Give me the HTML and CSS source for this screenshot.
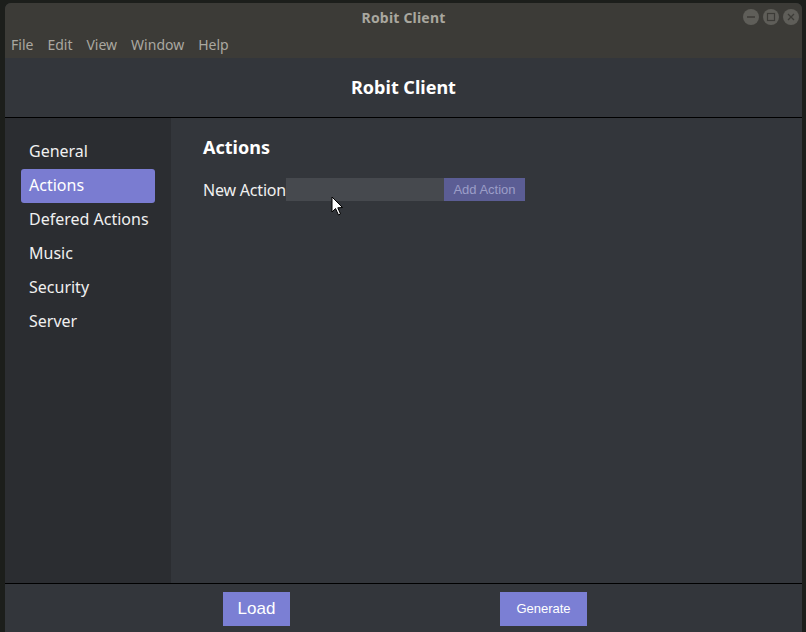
FILE: index.html
```html
<!DOCTYPE html>
<html>
<head>
<meta charset="utf-8">
<link rel="stylesheet" href="styles.css">
</head>
<body>
<div class="desktop">
  <div class="window">
    <div class="titlebar">
      <span class="title">Robit Client</span>
      <div class="wbtns">
        <span class="wbtn"><svg width="16" height="16" viewBox="0 0 16 16"><line x1="4" y1="8" x2="12" y2="8" stroke="#3c3b37" stroke-width="1.5"/></svg></span>
        <span class="wbtn"><svg width="16" height="16" viewBox="0 0 16 16"><rect x="4.5" y="4.5" width="7" height="7" fill="none" stroke="#3c3b37" stroke-width="1.2"/></svg></span>
        <span class="wbtn"><svg width="16" height="16" viewBox="0 0 16 16"><path d="M5 5 L11 11 M11 5 L5 11" stroke="#3c3b37" stroke-width="1.3"/></svg></span>
      </div>
    </div>
    <div class="menubar">
      <span>File</span><span>Edit</span><span>View</span><span>Window</span><span>Help</span>
    </div>
    <div class="app">
      <header class="header">Robit Client</header>
      <div class="main">
        <nav class="sidebar">
          <div class="item">General</div>
          <div class="item active">Actions</div>
          <div class="item">Defered Actions</div>
          <div class="item">Music</div>
          <div class="item">Security</div>
          <div class="item">Server</div>
        </nav>
        <section class="content">
          <h2 class="heading">Actions</h2>
          <div class="row">
            <label class="label">New Action</label>
            <div class="input"></div>
            <button class="add">Add Action</button>
          </div>
          <svg class="cursor" width="14" height="22" viewBox="0 0 14 22"><path d="M1 1 L1 16 L4.5 12.5 L7.5 19 L9.5 18 L6.8 11.8 L11.5 11.5 Z" fill="#fff" stroke="#000" stroke-width="1"/></svg>
        </section>
      </div>
      <footer class="footer">
        <button class="fbtn load">Load</button>
        <button class="fbtn gen">Generate</button>
      </footer>
    </div>
  </div>
</div>
</body>
</html>
```
FILE: styles.css
```css
* { box-sizing: border-box; }
html, body { margin: 0; padding: 0; }
body { width: 806px; height: 632px; overflow: hidden; background: #1c1e1b; font-family: "Noto Sans", "Open Sans", sans-serif; }
.desktop { width: 806px; height: 632px; padding: 3px 4px 0 5px; }
.window { width: 797px; height: 629px; display: flex; flex-direction: column; background: #33363b; border-radius: 6px 6px 0 0; overflow: hidden; }
.titlebar { height: 29px; background: #3c3b37; display: flex; align-items: center; justify-content: center; position: relative; flex: none; }
.title { color: #a9a79f; font-weight: bold; font-size: 14px; letter-spacing: 0.2px; }
.wbtns { position: absolute; right: 3px; top: 6px; display: flex; gap: 4px; }
.wbtn { width: 16px; height: 16px; border-radius: 50%; background: #5f5e59; display: block; }
.wbtn svg { display: block; }
.menubar { height: 26px; background: #3c3b37; display: flex; align-items: center; padding-left: 6px; color: #aaa8a0; font-size: 14px; flex: none; }
.menubar span { padding-bottom: 1px; margin-right: 14px; }
.app { flex: 1; display: flex; flex-direction: column; }
.header { height: 60px; flex: none; display: flex; align-items: center; justify-content: center; color: #fff; font-weight: bold; font-size: 18px; border-bottom: 1px solid #000; padding-bottom: 2px; }
.main { flex: 1; display: flex; }
.sidebar { width: 166px; background: #2b2d31; padding: 17px 16px 0 16px; display: flex; flex-direction: column; }
.item { height: 34px; line-height: 32px; color: #f0f0f0; font-size: 16px; padding-left: 8px; border-radius: 3px; }
.item.active { background: #7a7cd1; color: #fff; }
.content { flex: 1; padding: 16px 32px; position: relative; }
.heading { margin: 0 0 17px 0; color: #fff; font-size: 18px; font-weight: bold; line-height: 27px; }
.row { display: flex; align-items: center; height: 23px; }
.label { color: #f0f0f0; font-size: 16px; letter-spacing: -0.2px; }
.input { width: 158px; height: 23px; background: #46494e; }
.add { width: 81px; height: 23px; border: 0; margin: 0; padding: 0; background: #5b5d94; color: #9c9ec8; font-family: "Liberation Sans", Arial, sans-serif; font-size: 13px; }
.cursor { position: absolute; left: 160px; top: 78px; }
.footer { height: 49px; flex: none; border-top: 1px solid #000; display: flex; align-items: center; padding-top: 1px; }
.fbtn { border: 0; background: #7b7fd4; color: #fff; height: 34px; padding: 0; margin: 0; }
.load { width: 67px; margin-left: 218px; font-family: "Liberation Sans", Arial, sans-serif; font-size: 17px; }
.gen { width: 87px; margin-left: 210px; font-family: "Liberation Sans", Arial, sans-serif; font-size: 13px; }
```
